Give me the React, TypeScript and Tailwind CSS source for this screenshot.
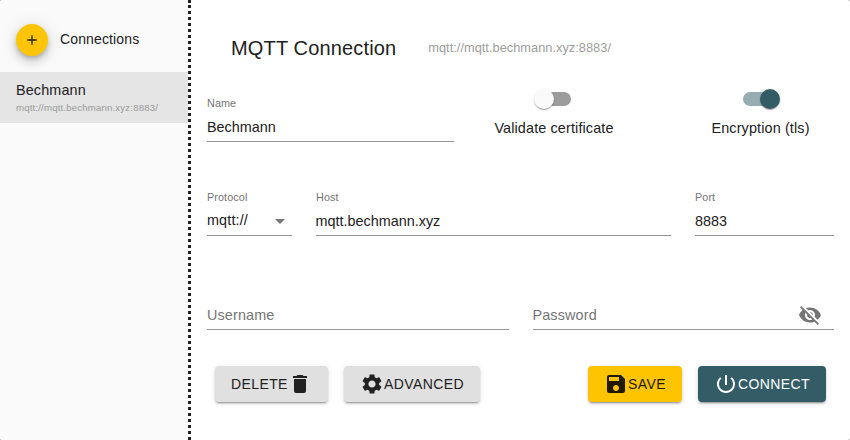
import React, { ReactNode } from "react";

function Icon({ d, className = "" }: { d: string; className?: string }) {
  return (
    <svg viewBox="0 0 24 24" fill="currentColor" className={`size-6 shrink-0 ${className}`}>
      <path d={d} />
    </svg>
  );
}

const icons = {
  add: "M19 13h-6v6h-2v-6H5v-2h6V5h2v6h6v2z",
  trash: "M6 19c0 1.1.9 2 2 2h8c1.1 0 2-.9 2-2V7H6v12zM19 4h-3.5l-1-1h-5l-1 1H5v2h14V4z",
  gear: "M19.14 12.94c.04-.3.06-.61.06-.94 0-.32-.02-.64-.07-.94l2.03-1.58c.18-.14.23-.41.12-.61l-1.92-3.32c-.12-.22-.37-.29-.59-.22l-2.39.96c-.5-.38-1.03-.7-1.62-.94l-.36-2.54c-.04-.24-.24-.41-.48-.41h-3.84c-.24 0-.43.17-.47.41l-.36 2.54c-.59.24-1.13.57-1.62.94l-2.39-.96c-.22-.08-.47 0-.59.22L2.74 8.87c-.12.21-.08.47.12.61l2.03 1.58c-.05.3-.09.63-.09.94s.02.64.07.94l-2.03 1.58c-.18.14-.23.41-.12.61l1.92 3.32c.12.22.37.29.59.22l2.39-.96c.5.38 1.03.7 1.62.94l.36 2.54c.05.24.24.41.48.41h3.84c.24 0 .44-.17.47-.41l.36-2.54c.59-.24 1.13-.56 1.62-.94l2.39.96c.22.08.47 0 .59-.22l1.92-3.32c.12-.22.07-.47-.12-.61l-2.01-1.58zM12 15.6c-1.98 0-3.6-1.62-3.6-3.6s1.62-3.6 3.6-3.6 3.6 1.62 3.6 3.6-1.62 3.6-3.6 3.6z",
  save: "M17 3H5c-1.11 0-2 .9-2 2v14c0 1.1.89 2 2 2h14c1.1 0 2-.9 2-2V7l-4-4zm-5 16c-1.66 0-3-1.34-3-3s1.34-3 3-3 3 1.34 3 3-1.34 3-3 3zm3-10H5V5h10v4z",
  power: "M13 3h-2v10h2V3zm4.83 2.17l-1.42 1.42C17.99 7.86 19 9.81 19 12c0 3.87-3.13 7-7 7s-7-3.13-7-7c0-2.19 1.01-4.14 2.58-5.42L6.17 5.17C4.23 6.82 3 9.26 3 12c0 4.97 4.03 9 9 9s9-4.03 9-9c0-2.74-1.23-5.18-3.17-6.83z",
  hidden: "M12 7c2.76 0 5 2.24 5 5 0 .65-.13 1.26-.36 1.83l2.92 2.92c1.51-1.26 2.7-2.89 3.43-4.75-1.73-4.39-6-7.5-11-7.5-1.4 0-2.74.25-3.98.7l2.16 2.16C10.74 7.13 11.35 7 12 7zM2 4.27l2.28 2.28.46.46C3.08 8.3 1.78 10.02 1 12c1.73 4.39 6 7.5 11 7.5 1.55 0 3.03-.3 4.38-.84l.42.42L19.73 22 21 20.73 3.27 3 2 4.27zM7.53 9.8l1.55 1.55c-.05.21-.08.43-.08.65 0 1.66 1.34 3 3 3 .22 0 .44-.03.65-.08l1.55 1.55c-.67.33-1.41.53-2.2.53-2.76 0-5-2.24-5-5 0-.79.2-1.53.53-2.2zm4.31-.78l3.15 3.15.02-.16c0-1.66-1.34-3-3-3l-.17.01z",
  caret: "M7 10l5 5 5-5z",
};

interface FieldProps {
  label: string;
  value?: string;
  width: string;
  valueClass?: string;
  children?: ReactNode;
}

function Field({ label, value, width, valueClass = "tracking-normal", children }: FieldProps) {
  return (
    <div className={`flex h-[46px] flex-col border-b border-[#949494] ${width}`}>
      <div className="h-[15px] text-[10.8px] leading-[14px] tracking-[0.1px] text-[#757575]">{value ? label : ""}</div>
      <div className="flex h-[30px] items-center justify-between pt-[2px]">
        <span className={value ? valueClass : "text-[#757575]"}>{value ?? label}</span>
        {children}
      </div>
    </div>
  );
}

function Toggle({ label, on = false, width }: { label: string; on?: boolean; width: string }) {
  return (
    <div className={`flex shrink-0 flex-col items-center ${width}`}>
      <div className={`flex h-[14px] w-[34px] items-center rounded-full ${on ? "justify-end bg-[#98adb2]" : "bg-[#9c9c9c]"}`}>
        <div
          className={`size-5 shrink-0 rounded-full shadow-[0_2px_1px_-1px_rgba(0,0,0,0.2),0_1px_1px_rgba(0,0,0,0.14),0_1px_3px_rgba(0,0,0,0.12)] ${on ? "-mr-[3px] bg-[#335c67]" : "-ml-[3px] bg-[#fafafa]"}`}
        />
      </div>
      <span className={`mt-[12px] leading-5 ${on ? "pl-px" : ""}`}>{label}</span>
    </div>
  );
}

function Button({ className, children }: { className: string; children: ReactNode }) {
  return (
    <button
      className={`flex h-9 items-center rounded px-4 text-[14px] tracking-[0.4px] shadow-[0_3px_1px_-2px_rgba(0,0,0,0.2),0_2px_2px_rgba(0,0,0,0.14),0_1px_5px_rgba(0,0,0,0.12)] ${className}`}
    >
      {children}
    </button>
  );
}

export default function App() {
  return (
    <div className="h-[440px] w-[850px] bg-[#bdbdbd]">
      <div className="flex h-full w-full overflow-hidden rounded-[3px] bg-white font-['Liberation_Sans',sans-serif] text-[14.4px] leading-5 tracking-[0.135px] text-[#212121]">
        <aside className="w-[188px] shrink-0 bg-[#fafafa]">
          <div className="flex h-[72px] items-center gap-3 px-4 pt-2">
            <div className="flex size-8 items-center justify-center rounded-full bg-[#ffc400] shadow-[0_3px_5px_-1px_rgba(0,0,0,0.2),0_6px_10px_rgba(0,0,0,0.14),0_1px_18px_rgba(0,0,0,0.12)]">
              <Icon d={icons.add} className="size-4!" />
            </div>
            <span className="-mt-0.5 text-[14px]">Connections</span>
          </div>
          <div className="h-[51px] bg-[#e5e5e5] px-4 pt-2">
            <div>Bechmann</div>
            <div className="text-[9.6px] leading-[15px] tracking-[0.185px] text-[#9a9a9a]">mqtt://mqtt.bechmann.xyz:8883/</div>
          </div>
        </aside>
        <svg width="3" height="440" className="shrink-0">
          <path d="M1.5 0V3M1.5 5V440" stroke="#212121" strokeWidth="3" strokeDasharray="3 3" />
        </svg>
        <main className="flex min-w-0 flex-1 flex-col px-4">
          <header className="flex h-[92px] items-center gap-8 px-6 pt-[3px]">
            <h1 className="text-[20px] tracking-[0.15px]">MQTT Connection</h1>
            <span className="text-[12.8px] tracking-[0.02px] text-[#9e9e9e]">mqtt://mqtt.bechmann.xyz:8883/</span>
          </header>
          <div className="flex h-[94px]">
            <div className="w-[247px] shrink-0 pt-1">
              <Field label="Name" value="Bechmann" width="w-full" />
            </div>
            <Toggle label="Validate certificate" width="w-[200px]" />
            <Toggle label="Encryption (tls)" on width="ml-8 w-[148px]" />
          </div>
          <div className="flex h-[94px] gap-6 pt-1">
            <Field label="Protocol" value="mqtt://" width="w-[85px]" valueClass="-mt-0.5">
              <Icon d={icons.caret} className="text-[#757575]" />
            </Field>
            <Field label="Host" value="mqtt.bechmann.xyz" width="w-[355px]" valueClass="tracking-normal -ml-[0.5px]" />
            <Field label="Port" value="8883" width="w-[139px]" />
          </div>
          <div className="flex h-[86px] gap-6 pt-1">
            <Field label="Username" width="flex-1" />
            <Field label="Password" width="flex-1">
              <Icon d={icons.hidden} className="mr-3 text-[#757575]" />
            </Field>
          </div>
          <div className="flex justify-between px-2">
            <div className="flex gap-4">
              <Button className="w-[113px] bg-[#e0e0e0]">DELETE<Icon d={icons.trash} /></Button>
              <Button className="w-[136px] bg-[#e0e0e0]"><Icon d={icons.gear} />ADVANCED</Button>
            </div>
            <div className="flex gap-4">
              <Button className="w-[94px] bg-[#ffc400] text-[#211a00]"><Icon d={icons.save} />SAVE</Button>
              <Button className="w-[128px] bg-[#335c67] text-white"><Icon d={icons.power} />CONNECT</Button>
            </div>
          </div>
        </main>
      </div>
    </div>
  );
}
